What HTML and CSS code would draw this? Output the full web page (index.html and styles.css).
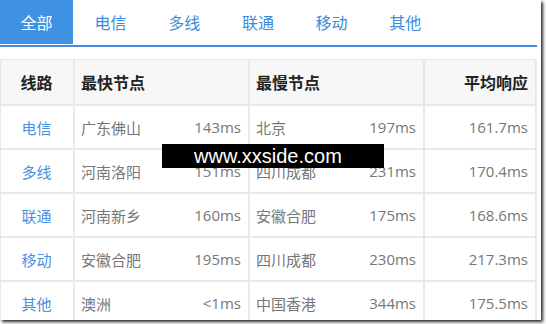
FILE: index.html
```html
<!DOCTYPE html>
<html lang="zh-CN">
<head>
<meta charset="utf-8">
<title>线路响应</title>
<link rel="stylesheet" href="styles.css">
</head>
<body>
<div class="frame">
  <nav class="tabs">
    <span class="tab active">全部</span>
    <span class="tab">电信</span>
    <span class="tab">多线</span>
    <span class="tab">联通</span>
    <span class="tab">移动</span>
    <span class="tab">其他</span>
  </nav>
  <div class="table">
    <div class="row head">
      <div class="cell c1">线路</div>
      <div class="cell split">最快节点</div>
      <div class="cell split">最慢节点</div>
      <div class="cell c4">平均响应</div>
    </div>
    <div class="row">
      <div class="cell c1"><a>电信</a></div>
      <div class="cell split"><span>广东佛山</span><span>143ms</span></div>
      <div class="cell split"><span>北京</span><span>197ms</span></div>
      <div class="cell c4">161.7ms</div>
    </div>
    <div class="row">
      <div class="cell c1"><a>多线</a></div>
      <div class="cell split"><span>河南洛阳</span><span>151ms</span></div>
      <div class="cell split"><span>四川成都</span><span>231ms</span></div>
      <div class="cell c4">170.4ms</div>
    </div>
    <div class="row">
      <div class="cell c1"><a>联通</a></div>
      <div class="cell split"><span>河南新乡</span><span>160ms</span></div>
      <div class="cell split"><span>安徽合肥</span><span>175ms</span></div>
      <div class="cell c4">168.6ms</div>
    </div>
    <div class="row">
      <div class="cell c1"><a>移动</a></div>
      <div class="cell split"><span>安徽合肥</span><span>195ms</span></div>
      <div class="cell split"><span>四川成都</span><span>230ms</span></div>
      <div class="cell c4">217.3ms</div>
    </div>
    <div class="row">
      <div class="cell c1"><a>其他</a></div>
      <div class="cell split"><span>澳洲</span><span>&lt;1ms</span></div>
      <div class="cell split"><span>中国香港</span><span>344ms</span></div>
      <div class="cell c4">175.5ms</div>
    </div>
  </div>
  <div class="watermark">www.xxside.com</div>
</div>
</body>
</html>
```
FILE: styles.css
```css
html, body {
  margin: 0;
  padding: 0;
  background: #fff;
}
body {
  width: 546px;
  height: 324px;
  overflow: hidden;
  font-family: "Open Sans", "Noto Sans CJK SC", sans-serif;
}
.frame {
  position: relative;
  width: 541px;
  height: 320px;
  overflow: hidden;
  background: #fff;
  box-shadow: 2px 2px 3px rgba(0, 0, 0, 0.85);
}
.tabs {
  display: flex;
  width: 537px;
  height: 45px;
  border-bottom: 2px solid #3f8de2;
  box-sizing: content-box;
}
.tab {
  width: 73.7px;
  height: 44px;
  display: flex;
  align-items: center;
  justify-content: center;
  font-size: 16px;
  color: #3b8be0;
  font-family: "Noto Sans CJK SC", sans-serif;
}
.tab.active {
  width: 73px;
  margin-right: 0.7px;
  background: #4191e3;
  color: #fff;
}
.table {
  margin-top: 12px;
  width: 536px;
  border-top: 1px solid #e9e9e9;
  border-left: 1px solid #e9e9e9;
}
.row {
  display: grid;
  grid-template-columns: 74px 175px 175px 112px;
  height: 44px;
}
.row.head {
  height: 46px;
  background: #f7f7f7;
  font-weight: 700;
  font-size: 16px;
  color: #222;
}
.cell {
  box-sizing: border-box;
  border-right: 2px solid #e9e9e9;
  border-bottom: 2px solid #e9e9e9;
  display: flex;
  align-items: center;
  font-size: 15px;
  color: #777;
}
.head .cell {
  font-size: 16px;
  color: #222;
  font-family: "Noto Sans CJK SC", sans-serif;
}
.c1 {
  justify-content: center;
  padding-right: 1px;
}
.c1 a {
  color: #4a90e2;
  font-family: "Noto Sans CJK SC", sans-serif;
}
.split {
  justify-content: space-between;
  padding: 0 7px 0 6px;
}
.split span:first-child {
  font-family: "Noto Sans CJK SC", sans-serif;
}
.c4 {
  justify-content: flex-end;
  padding-right: 7px;
}
.watermark {
  position: absolute;
  left: 162px;
  top: 144px;
  width: 222px;
  height: 24px;
  box-sizing: border-box;
  padding-left: 32px;
  background: #000;
  color: #fff;
  font-family: "Liberation Sans", Arial, sans-serif;
  font-size: 20px;
  line-height: 24px;
}
```
